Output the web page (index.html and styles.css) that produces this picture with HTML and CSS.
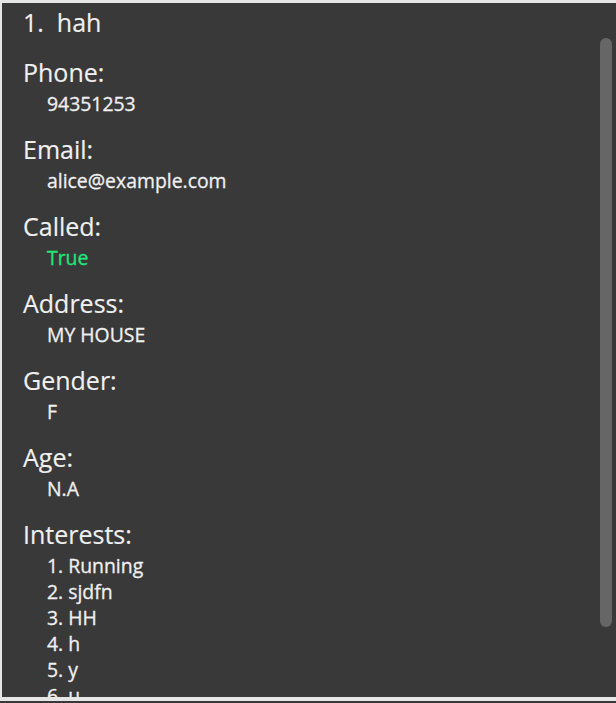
FILE: index.html
```html
<!DOCTYPE html>
<html>
<head>
<meta charset="utf-8">
<link rel="stylesheet" href="styles.css">
</head>
<body>
<div class="panel">
  <div class="title">1.&nbsp; hah</div>
  <div class="field">
    <div class="label">Phone:</div>
    <div class="value">94351253</div>
  </div>
  <div class="field">
    <div class="label">Email:</div>
    <div class="value">alice@example.com</div>
  </div>
  <div class="field">
    <div class="label">Called:</div>
    <div class="value called">True</div>
  </div>
  <div class="field">
    <div class="label">Address:</div>
    <div class="value">MY HOUSE</div>
  </div>
  <div class="field">
    <div class="label">Gender:</div>
    <div class="value">F</div>
  </div>
  <div class="field">
    <div class="label">Age:</div>
    <div class="value">N.A</div>
  </div>
  <div class="field">
    <div class="label">Interests:</div>
    <div class="value">1. Running</div>
    <div class="value">2. sjdfn</div>
    <div class="value">3. HH</div>
    <div class="value">4. h</div>
    <div class="value">5. y</div>
    <div class="value">6. u</div>
  </div>
  <div class="scrollbar"></div>
</div>
<div class="below"></div>
</body>
</html>
```
FILE: styles.css
```css
html, body {
  margin: 0;
  padding: 0;
}
body {
  background: #e6e6e6;
  width: 616px;
  height: 703px;
  overflow: hidden;
  font-family: "Open Sans", "Noto Sans", sans-serif;
}
.panel {
  position: relative;
  margin: 3px 0 0 2px;
  height: 694px;
  background: #393939;
  overflow: hidden;
  padding: 4px 0 0 21px;
  box-sizing: border-box;
  color: #f0f0f0;
}
.title {
  font-size: 25px;
  line-height: 30px;
  margin-bottom: 20px;
  -webkit-text-stroke: 0.15px currentColor;
}
.field {
  margin-bottom: 17px;
}
.label {
  font-size: 25px;
  line-height: 30px;
  margin-bottom: 4px;
  -webkit-text-stroke: 0.15px currentColor;
}
.value {
  font-size: 19.4px;
  line-height: 26px;
  padding-left: 24px;
  -webkit-text-stroke: 0.3px currentColor;
}
.called {
  color: #22e57a;
}
.scrollbar {
  position: absolute;
  left: 598px;
  top: 35px;
  width: 12px;
  height: 589px;
  background: #666666;
  border-radius: 6px;
}
.below {
  margin-top: 4px;
  height: 10px;
  background: #393939;
}
```
